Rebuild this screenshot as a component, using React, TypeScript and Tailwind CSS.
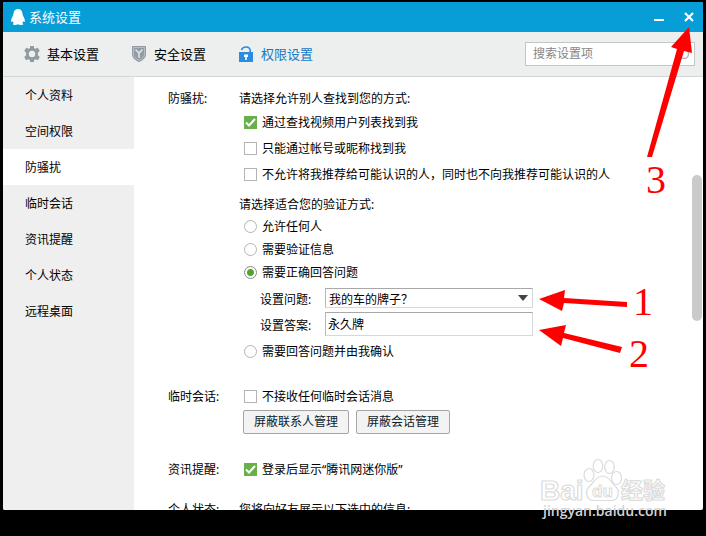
import { useState, type ReactNode } from "react";

const NAV = ["个人资料", "空间权限", "防骚扰", "临时会话", "资讯提醒", "个人状态", "远程桌面"];

function Penguin() {
  return (
    <svg width="14" height="18" viewBox="0 0 14 18" fill="#fff" aria-hidden="true">
      <path d="M7 1C4.400 1 2.700 3 2.500 5.800C2.400 7 2 7.800 1.300 9C.4 10.800 0 12.500 .2 13.600C.4 14.400 1.100 14 1.800 13.200C2 14 2.300 14.500 2.900 15.100C2 15.500 1.600 16 1.900 16.600C2.300 17.300 5.700 17.300 7 16.300C8.300 17.300 11.700 17.300 12.100 16.600C12.400 16 12 15.500 11.100 15.100C11.700 14.500 12 14 12.200 13.200C12.900 14 13.600 14.400 13.800 13.600C14 12.500 13.600 10.800 12.700 9C12 7.800 11.600 7 11.500 5.800C11.300 3 9.600 1 7 1Z" />
    </svg>
  );
}

function Gear() {
  return (
    <svg width="16" height="16" viewBox="0 0 16 16" fill="#929ba4" aria-hidden="true">
      <path
        fillRule="evenodd"
        d="M6 0H10V2L11.500 2.800L13.800 1.800L15.800 5L14 6.400V9.600L15.800 11L13.800 14.200L11.500 13.200L10 14V16H6V14L4.500 13.200L2.200 14.200L.2 11L2 9.600V6.400L.2 5L2.200 1.800L4.500 2.800L6 2ZM8 4.800A3.200 3.200 0 1 0 8 11.200A3.200 3.200 0 1 0 8 4.800Z"
      />
    </svg>
  );
}

function Shield() {
  return (
    <svg width="16" height="16" viewBox="0 0 16 16" aria-hidden="true">
      <path d="M1 0H15V8C15 12 11.500 14.500 8 16C4.500 14.500 1 12 1 8Z" fill="#929ba4" />
      <path d="M2.500 1.500H13.500V8C13.500 11 10.800 13 8 14.300C5.200 13 2.500 11 2.500 8Z" fill="none" stroke="#c3c8cc" strokeWidth=".8" />
      <path d="M4.500 3.500L8 7L11.500 3.500M8 7V12" fill="none" stroke="#dfe2e4" strokeWidth="1.600" />
    </svg>
  );
}

function Lock() {
  return (
    <svg width="16" height="16" viewBox="0 0 16 16" aria-hidden="true">
      <path d="M3.500 4C4.200 1.800 5.800 1 8 1C10.600 1 12.200 2.500 12.200 5V6" fill="none" stroke="#2a8ce0" strokeWidth="1.600" />
      <path d="M1 6H15V16H1Z" fill="#2a8ce0" />
      <path d="M6 8.500H10V11H8.800V14H7.200V11H6Z" fill="#fff" />
    </svg>
  );
}

function Check({ label, on = false }: { label: string; on?: boolean }) {
  const [checked, setChecked] = useState(on);
  return (
    <label className="flex h-[26px] items-center gap-[5px] pl-[5px]">
      <span className="grid size-[13px] shrink-0">
        <input
          type="checkbox"
          checked={checked}
          onChange={(e) => setChecked(e.target.checked)}
          className="col-start-1 row-start-1 size-[13px] appearance-none border border-[#b4b4b4] bg-white checked:border-[#68b04a] checked:bg-[#68b04a]"
        />
        {checked && (
          <svg className="pointer-events-none col-start-1 row-start-1" width="13" height="13" viewBox="0 0 13 13" aria-hidden="true">
            <path d="M2 6.500L5 9.500L11 3" fill="none" stroke="#fff" strokeWidth="2" />
          </svg>
        )}
      </span>
      <span className="pt-[2px]">{label}</span>
    </label>
  );
}

function Radio({ label, value, current, onPick }: { label: string; value: number; current: number; onPick: (v: number) => void }) {
  return (
    <label className="flex h-[23px] items-center gap-[5px] pl-[5px]">
      <input
        type="radio"
        name="verify"
        checked={current === value}
        onChange={() => onPick(value)}
        className="size-[13px] shrink-0 appearance-none rounded-full border border-[#b4b4b4] bg-white checked:border-[#8a8a8a] checked:bg-[radial-gradient(circle,#4ea72a_3px,#fff_4px)]"
      />
      <span className="pt-px">{label}</span>
    </label>
  );
}

function Section({ title, className, children }: { title: string; className: string; children: ReactNode }) {
  return (
    <section className={`flex ${className}`}>
      <h2 className="w-[71px] shrink-0 pt-[2px] leading-5">{title}</h2>
      <div className="min-w-0 flex-1">{children}</div>
    </section>
  );
}

function Watermark() {
  return (
    <svg
      className="pointer-events-none absolute right-[36px] bottom-[12px]"
      width="130"
      height="66"
      viewBox="0 0 130 66"
      aria-hidden="true"
      fontFamily='"Liberation Sans", "Noto Sans CJK SC", sans-serif'
      fontWeight="700"
    >
      <g fill="#fff" stroke="#dcdcdc" strokeWidth="1.200">
        <text x="0" y="42" fontSize="28">Bai</text>
        <ellipse cx="49" cy="17" rx="5" ry="6.500" />
        <ellipse cx="58" cy="8" rx="4.800" ry="6.500" />
        <ellipse cx="69.500" cy="9" rx="4.800" ry="6.500" />
        <ellipse cx="76.500" cy="20" rx="5" ry="6.500" />
        <path d="M62.500 18C56 18 54 24 50 28C45 32 45 42 54 42.500H71C80 42 80 32 75 28C71 24 69 18 62.500 18Z" />
        <text x="52" y="39" fontSize="17" strokeWidth="1">du</text>
        <text x="81" y="40" fontSize="22">经验</text>
      </g>
      <text x="3" y="58" fontSize="14" fontWeight="600" fill="#d4d4d4" fontFamily='"Open Sans", sans-serif'>
        jingyan.baidu.com
      </text>
    </svg>
  );
}

function Annotations() {
  return (
    <svg className="pointer-events-none absolute top-0 right-0" width="180" height="380" viewBox="526 0 180 380" fill="#f00" aria-hidden="true">
      <path d="M689 27L692 53L684 51L652 157H647L677 49L671 47Z" />
      <path d="M539 299L565 290L564 298L627 302V307L564 303L562 311Z" />
      <path d="M539 330L566 325L564 333L622 347L620 353L563 338L561 346Z" />
      <g fontFamily='"Liberation Serif", serif' fontSize="40">
        <text x="633" y="315">1</text>
        <text x="629" y="367">2</text>
        <text x="646" y="193">3</text>
      </g>
    </svg>
  );
}

export default function App() {
  const [active, setActive] = useState(2);
  const [verify, setVerify] = useState(2);
  const button = "h-6 rounded-[2px] border border-[#a6a6a6] bg-[#f3f3f3] px-[10px] text-[#0b1c2c]";
  return (
    <div className='relative flex h-screen flex-col overflow-hidden bg-black px-[3px] pt-[2px] pb-[26px] font-["Noto_Sans","Noto_Sans_CJK_SC",sans-serif] text-[12px] text-black'>
      <div className="flex min-h-0 flex-1 flex-col overflow-hidden rounded-[2px] bg-white">
        <header className="flex h-[30px] shrink-0 items-center bg-[#079dd7] pr-[7px] pl-2 text-white">
          <Penguin />
          <h1 className="ml-1 flex-1 pt-px text-[13px]">系统设置</h1>
          <button aria-label="最小化" className="grid size-[14px] place-items-center">
            <svg width="10" height="10" viewBox="0 0 10 10" aria-hidden="true">
              <path d="M0 8H10" stroke="#fff" strokeWidth="2" />
            </svg>
          </button>
          <button aria-label="关闭" className="ml-4 grid size-[14px] place-items-center">
            <svg width="10" height="10" viewBox="0 0 10 10" aria-hidden="true">
              <path d="M1 1L9 9M9 1L1 9" stroke="#fff" strokeWidth="2.200" />
            </svg>
          </button>
        </header>

        <div className="flex h-[45px] shrink-0 items-center border-b border-[#d6d6d6] bg-[#edeeee] pr-2 pl-[21px]">
          <nav className="flex flex-1 gap-8 text-[13px]">
            <button className="flex items-center gap-[7px]"><Gear /><span className="pt-[2px]">基本设置</span></button>
            <button className="flex items-center gap-[7px]"><Shield /><span className="pt-[2px]">安全设置</span></button>
            <button className="flex items-center gap-[7px] text-[#1679c4]"><Lock /><span className="pt-[2px]">权限设置</span></button>
          </nav>
          <label className="flex h-6 w-[170px] items-center border border-[#c3c6c8] bg-white pr-1 pl-[7px]">
            <input aria-label="搜索设置项" placeholder="搜索设置项" className="min-w-0 flex-1 outline-none placeholder:text-[#868686]" />
            <svg width="13" height="13" viewBox="0 0 13 13" fill="none" stroke="#b4b4b4" strokeWidth="1.500" aria-hidden="true">
              <circle cx="7" cy="6" r="4.500" />
              <path d="M4 9L1 12" />
            </svg>
          </label>
        </div>

        <div className="flex min-h-0 flex-1">
          <nav className="flex w-[131px] shrink-0 flex-col bg-[#efefef]">
            {NAV.map((item, i) => (
              <button
                key={item}
                onClick={() => setActive(i)}
                className={`h-9 shrink-0 pt-[2px] pl-[22px] text-left ${i === active ? "bg-white" : ""}`}
              >
                {item}
              </button>
            ))}
          </nav>

          <main className="min-w-0 flex-1 overflow-hidden pt-[10px] pl-[34px]">
            <Section title="防骚扰:" className="">
              <p className="pt-[2px] leading-5">请选择允许别人查找到您的方式:</p>
              <Check label="通过查找视频用户列表找到我" on />
              <Check label="只能通过帐号或昵称找到我" />
              <Check label="不允许将我推荐给可能认识的人，同时也不向我推荐可能认识的人" />
              <p className="mt-[6px] pt-[2px] leading-5">请选择适合您的验证方式:</p>
              <Radio label="允许任何人" value={0} current={verify} onPick={setVerify} />
              <Radio label="需要验证信息" value={1} current={verify} onPick={setVerify} />
              <Radio label="需要正确回答问题" value={2} current={verify} onPick={setVerify} />
              <div className="flex flex-col gap-1 py-1 pl-[21px]">
                <div className="flex h-5 items-center">
                  <label htmlFor="question" className="w-[65px] pt-1">设置问题:</label>
                  <div className="grid w-[208px] items-center">
                    <select id="question" className="col-start-1 row-start-1 h-5 appearance-none border border-[#d8d8d8] border-t-[#a8a8a8] border-l-[#b8b8b8] bg-white pt-[2px] pl-[3px]">
                      <option>我的车的牌子？</option>
                    </select>
                    <svg className="pointer-events-none col-start-1 row-start-1 mr-[5px] justify-self-end" width="10" height="6" viewBox="0 0 10 6" aria-hidden="true">
                      <path d="M0 0H10L5 6Z" fill="#444" />
                    </svg>
                  </div>
                </div>
                <div className="flex h-6 items-center">
                  <label htmlFor="answer" className="w-[65px] pt-1">设置答案:</label>
                  <input id="answer" defaultValue="永久牌" className="h-6 w-[208px] border border-[#d8d8d8] border-t-[#a8a8a8] border-l-[#b8b8b8] px-[2px]" />
                </div>
              </div>
              <Radio label="需要回答问题并由我确认" value={3} current={verify} onPick={setVerify} />
            </Section>

            <Section title="临时会话:" className="mt-[22px]">
              <div className="-my-[2px]"><Check label="不接收任何临时会话消息" /></div>
              <div className="mt-[3px] flex gap-[7px] pl-1">
                <button className={button}>屏蔽联系人管理</button>
                <button className={button}>屏蔽会话管理</button>
              </div>
            </Section>

            <Section title="资讯提醒:" className="mt-6">
              <div className="-my-[2px]"><Check label="登录后显示“腾讯网迷你版”" on /></div>
            </Section>

            <Section title="个人状态:" className="mt-[18px]">
              <p className="pt-[2px] leading-5">您将向好友展示以下选中的信息:</p>
            </Section>
          </main>

          <div className="w-[11px] shrink-0 pt-[98px] pr-px">
            <div className="h-[146px] rounded-full bg-[#cacaca]" />
          </div>
        </div>
      </div>
      <Watermark />
      <Annotations />
    </div>
  );
}
